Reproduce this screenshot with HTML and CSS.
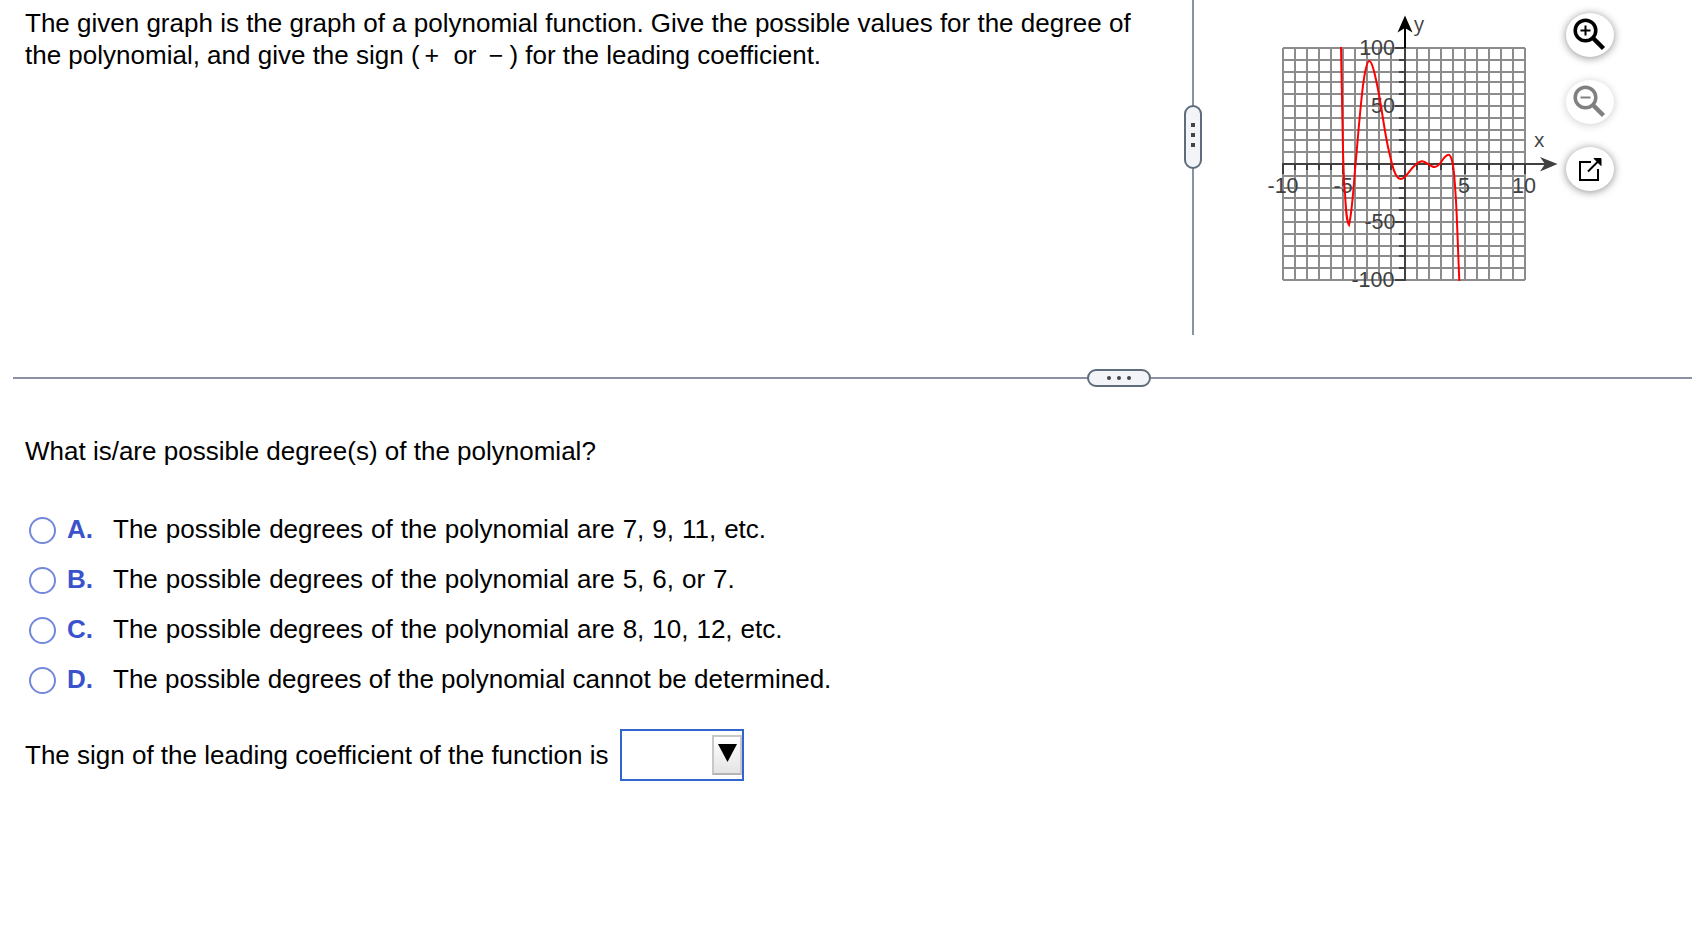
FILE: index.html
```html
<!DOCTYPE html>
<html lang="en">
<head>
    <meta charset="UTF-8">
    <meta name="viewport" content="width=device-width, initial-scale=1.0">
    <title>Polynomial Functions</title>
    <link rel="stylesheet" href="styles.css">
</head>
<body>

    <section class="problem">
        <div class="prompt">
            <p>The given graph is the graph of a polynomial function. Give the possible values for the degree of</p>
            <p>the polynomial, and give the sign (<span class="sign">+</span> or <span class="sign minus">−</span>) for the leading coefficient.</p>
        </div>

        <div class="divider-v">
            <button class="handle handle-v" aria-label="Resize"><i></i><i></i><i></i></button>
        </div>

        <!-- viewBox starts at the page x of the figure -->
        <svg class="graph" viewBox="1254 0 306 300" width="306" height="300">
            <path class="grid" d="M1283 48V280M1295 48V280M1307 48V280M1319 48V280M1331 48V280M1343 48V280M1355 48V280M1367 48V280M1379 48V280M1391 48V280M1417 48V280M1429 48V280M1441 48V280M1453 48V280M1465 48V280M1477 48V280M1489 48V280M1501 48V280M1513 48V280M1525 48V280"/>
            <path class="grid" d="M1283 48H1525M1283 60H1525M1283 72H1525M1283 82H1525M1283 94H1525M1283 106H1525M1283 118H1525M1283 130H1525M1283 140H1525M1283 152H1525M1283 176H1525M1283 188H1525M1283 198H1525M1283 210H1525M1283 222H1525M1283 234H1525M1283 246H1525M1283 256H1525M1283 268H1525M1283 280H1525"/>

            <!-- axes and ticks -->
            <path class="axis" d="M1282 164H1548M1405 47V281"/>
            <path class="axis" d="M1283 164V174M1295 164V170M1307 164V170M1319 164V170M1331 164V170M1343 164V174M1355 164V170M1367 164V170M1379 164V170M1391 164V170M1417 164V170M1429 164V170M1441 164V170M1453 164V170M1465 164V174M1477 164V170M1489 164V170M1501 164V170M1513 164V170M1525 164V174"/>
            <path class="axis" d="M1395 48H1405M1399 60H1405M1399 72H1405M1399 82H1405M1399 94H1405M1395 106H1405M1399 118H1405M1399 130H1405M1399 140H1405M1399 152H1405M1399 176H1405M1399 188H1405M1399 198H1405M1399 210H1405M1395 222H1405M1399 234H1405M1399 246H1405M1399 256H1405M1399 268H1405M1395 280H1405"/>
            <path d="M1404 48V28H1406V48Z"/>
            <path d="M1405 15.500L1412.500 32.500L1405 28L1397.500 32.500Z"/>
            <path class="tip" d="M1557.500 164L1540 171.500L1545 164L1540 157Z"/>

            <g class="labels">
                <text x="1395" y="54.500" text-anchor="end">100</text>
                <text x="1395" y="112.500" text-anchor="end">50</text>
                <text x="1395.500" y="228.500" text-anchor="end">-50</text>
                <text x="1394.500" y="286.500" text-anchor="end">-100</text>
                <text x="1267.500" y="192.500">-10</text>
                <text x="1333.500" y="192.500">-5</text>
                <text x="1458" y="192.500">5</text>
                <text x="1512" y="192.500">10</text>
                <text class="name" x="1414" y="31">y</text>
                <text class="name" x="1534" y="147">x</text>
            </g>

            <path class="curve" d="M1341 47L1343 150C1343.500 170 1344 185 1345 193C1346 212 1346.500 221 1349 225C1351 217 1353.500 190 1355 170C1356.500 155 1359 122 1361.700 97C1363 84 1366 61 1369.300 61C1372.500 61 1376 79 1378.700 93C1382 110 1385 135 1388.700 150C1392 165 1395 179 1401 179C1407 179 1412 163 1421.700 161.300C1426 161 1430 167 1434.500 167C1441 167 1443 155 1448.500 154.700C1451 154.500 1453 163 1454 173C1455.500 190 1456.700 212 1457.300 230L1459.300 281"/>
        </svg>

        <div class="tools">
            <button class="tool" aria-label="Zoom in">
                <svg viewBox="0 0 48 44" width="48" height="44">
                    <circle cx="19.500" cy="17.500" r="10.300" stroke-width="3.500"/>
                    <path d="M19.500 12.500V22.500M14.500 17.500H24.500" stroke-width="2"/>
                    <path d="M27 25L37.500 35.500" stroke-width="4.500"/>
                </svg>
            </button>
            <button class="tool off" aria-label="Zoom out">
                <svg viewBox="0 0 48 44" width="48" height="44">
                    <circle cx="19.500" cy="17.500" r="10.300" stroke-width="3.500"/>
                    <path d="M14.500 17.500H24.500" stroke-width="2"/>
                    <path d="M27 25L37.500 35.500" stroke-width="4.500"/>
                </svg>
            </button>
            <button class="tool" aria-label="Open in new window">
                <svg viewBox="0 0 48 44" width="48" height="44">
                    <path d="M25 15H14V33H32V22" stroke-width="2"/>
                    <path d="M22 24.500L32 14.500" stroke-width="2"/>
                    <path class="solid" d="M28 11.500H35V18.500Z"/>
                </svg>
            </button>
        </div>
    </section>

    <div class="divider-h">
        <button class="handle" aria-label="Resize"><i></i><i></i><i></i></button>
    </div>

    <section class="answer">
        <p>What is/are possible degree(s) of the polynomial?</p>

        <div class="choices">
            <label class="choice"><input type="radio" name="degree"><b>A.</b><span>The possible degrees of the polynomial are 7, 9, 11, etc.</span></label>
            <label class="choice"><input type="radio" name="degree"><b>B.</b><span>The possible degrees of the polynomial are 5, 6, or 7.</span></label>
            <label class="choice"><input type="radio" name="degree"><b>C.</b><span>The possible degrees of the polynomial are 8, 10, 12, etc.</span></label>
            <label class="choice last"><input type="radio" name="degree"><b>D.</b><span>The possible degrees of the polynomial cannot be determined.</span></label>
        </div>

        <div class="leading">
            <span class="leading-text">The sign of the leading coefficient of the function is</span>
            <div class="dropdown">
                <button class="arrow" aria-label="Choose a sign"><svg viewBox="0 0 19 18" width="19" height="18"><path d="M0 0H19L9.500 18Z"/></svg></button>
            </div>
        </div>
    </section>

</body>
</html>
```
FILE: styles.css
```css
body {
    margin: 0;
    background: #fff;
    color: #000;
    font-family: "Liberation Sans", Arial, sans-serif;
    font-size: 26px;
    line-height: 32px;
}
p {
    margin: 0;
    white-space: nowrap;
}
button {
    padding: 0;
    box-sizing: border-box;
}
.problem {
    display: flex;
    height: 335px;
}
.prompt {
    width: 1159px;
    padding: 7px 0 0 25px;
}
.sign {
    margin: 0 7px 0 5px;
    font-size: 25px;
}
.minus {
    margin: 0 6px 0 5px;
}
.divider-v {
    width: 18px;
    display: flex;
    justify-content: center;
    align-items: flex-start;
    padding-top: 105px;
    box-sizing: border-box;
    background: linear-gradient(#8b91a5, #8b91a5) center / 2px 100% no-repeat;
}
.handle {
    display: flex;
    align-items: center;
    justify-content: center;
    gap: 6px;
    width: 64px;
    height: 18px;
    border: 2px solid #5f6c7b;
    border-radius: 9px;
    background: #f2f4f7;
}
.handle i {
    width: 4px;
    height: 4px;
    border-radius: 50%;
    background: #444;
}
.handle-v {
    flex-direction: column;
    flex: none;
    width: 18px;
    height: 64px;
    padding-bottom: 4px;
}
.handle-v i {
    border-radius: 0;
}
.graph {
    margin-left: 52px;
}
.grid {
    stroke: #8c8c8c;
    stroke-width: 2;
}
.axis {
    stroke: #404040;
    stroke-width: 2;
}
.tip {
    fill: #404040;
}
.labels {
    fill: #404040;
    font-size: 21.500px;
}
.name {
    font-family: "Open Sans", sans-serif;
    font-size: 20px;
}
.curve {
    fill: none;
    stroke: #f00;
    stroke-width: 2;
}
.tools {
    display: flex;
    flex-direction: column;
    gap: 23px;
    margin-left: 6px;
    padding-top: 13px;
}
.tool {
    width: 48px;
    height: 44px;
    border: 0;
    border-radius: 50%;
    background: #fff;
    box-shadow: 0 1px 9px rgba(0, 0, 0, 0.45);
}
.tool svg {
    display: block;
    fill: none;
    stroke: #000;
}
.tool .solid {
    fill: #000;
}
.off {
    box-shadow: 0 1px 9px rgba(0, 0, 0, 0.2);
}
.off svg {
    stroke: #808080;
}
.divider-h {
    margin: 34px 0 0 13px;
    padding-left: 1074px;
    background: linear-gradient(#8b91a5, #8b91a5) center / 100% 2px no-repeat;
}
.answer {
    padding: 48px 0 0 25px;
}
.choices {
    padding-top: 38px;
}
.choice {
    display: flex;
    align-items: center;
    height: 50px;
    word-spacing: 0.75px;
}
.last {
    word-spacing: 0;
}
.choice input {
    appearance: none;
    width: 27px;
    height: 27px;
    margin: 0 11.500px 0 3.500px;
    border: 2.500px solid #7388dc;
    border-radius: 50%;
}
.choice b {
    width: 46px;
    color: #3a53cc;
}
.choice b, .choice span {
    padding-bottom: 2px;
}
.leading {
    display: flex;
    align-items: center;
    gap: 12px;
    padding-top: 24px;
}
.leading-text {
    width: 583px;
    white-space: nowrap;
}
.dropdown {
    display: flex;
    justify-content: flex-end;
    align-items: center;
    width: 124px;
    height: 52px;
    border: 2px solid #36c;
    box-sizing: border-box;
}
.arrow {
    display: flex;
    justify-content: center;
    width: 30px;
    height: 40px;
    padding-top: 7px;
    border: 2px solid #c8c8c8;
    border-bottom-color: #b4b4b4;
    background: linear-gradient(#fff, #e4e4e4);
}
```
